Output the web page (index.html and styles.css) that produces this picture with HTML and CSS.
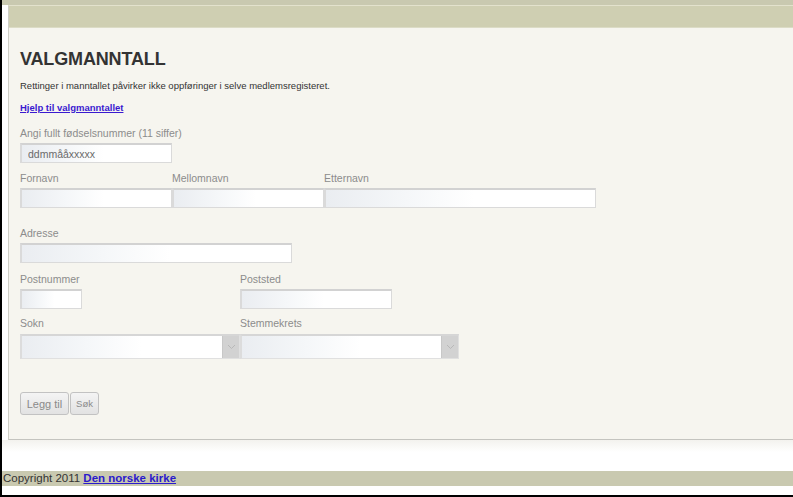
FILE: index.html
```html
<!DOCTYPE html>
<html lang="no">
<head>
<meta charset="utf-8">
<title>Valgmanntall</title>
<link rel="stylesheet" href="styles.css">
</head>
<body>
<div class="page">
  <div class="topstrip"></div>
  <div class="panel">
    <div class="panel-head"></div>
    <div class="panel-body">
      <h1 class="title">VALGMANNTALL</h1>
      <p class="desc">Rettinger i manntallet påvirker ikke oppføringer i selve medlemsregisteret.</p>
      <a class="help" href="#">Hjelp til valgmanntallet</a>

      <div class="field f-fnr">
        <label class="lbl">Angi fullt fødselsnummer (11 siffer)</label>
        <input class="inp w152" type="text" placeholder="ddmmååxxxxx">
      </div>

      <div class="row row-names">
        <div class="field">
          <label class="lbl">Fornavn</label>
          <input class="inp w152" type="text">
        </div>
        <div class="field">
          <label class="lbl">Mellomnavn</label>
          <input class="inp w152" type="text">
        </div>
        <div class="field">
          <label class="lbl">Etternavn</label>
          <input class="inp w272" type="text">
        </div>
      </div>

      <div class="field f-adr">
        <label class="lbl">Adresse</label>
        <input class="inp w272" type="text">
      </div>

      <div class="row row-post">
        <div class="field">
          <label class="lbl">Postnummer</label>
          <input class="inp w62" type="text">
        </div>
        <div class="field">
          <label class="lbl">Poststed</label>
          <input class="inp w152" type="text">
        </div>
      </div>

      <div class="row row-sokn">
        <div class="field">
          <label class="lbl lbl-sel">Sokn</label>
          <div class="sel w220"><select class="sel-box"><option></option></select><span class="sel-arrow"><svg width="9" height="6" viewBox="0 0 9 6"><path d="M1 1 L4.5 4.5 L8 1" fill="none" stroke="#b8b8b8" stroke-width="1"/></svg></span></div>
        </div>
        <div class="field">
          <label class="lbl lbl-sel">Stemmekrets</label>
          <div class="sel w219"><select class="sel-box"><option></option></select><span class="sel-arrow"><svg width="9" height="6" viewBox="0 0 9 6"><path d="M1 1 L4.5 4.5 L8 1" fill="none" stroke="#b8b8b8" stroke-width="1"/></svg></span></div>
        </div>
      </div>

      <div class="buttons">
        <button class="btn b-add" type="button">Legg til</button>
        <button class="btn b-search" type="button">Søk</button>
      </div>
    </div>
  </div>
  <div class="gap"></div>
  <div class="footer">Copyright 2011 <a href="#">Den norske kirke</a></div>
</div>
</body>
</html>
```

FILE: styles.css
```css
html, body {
  margin: 0;
  padding: 0;
  background: #fff;
  font-family: "Liberation Sans", Arial, sans-serif;
}

.page {
  height: 495px;
  border-left: 2px solid #000;
  border-bottom: 2px solid #000;
  overflow: hidden;
  display: flex;
  flex-direction: column;
}

.topstrip {
  height: 5px;
  background: #c9c9b0;
  flex: none;
}

.panel {
  margin-left: 6px;
  border-left: 1px solid #cfcfc7;
  border-top: 1px solid #e3e2cd;
  border-bottom: 1px solid #c4c4bf;
  background: #f6f5ef;
  flex: none;
}

.panel-head {
  height: 21px;
  background: #cfcfb2;
  border-bottom: 1px solid #dcdcc6;
}

.panel-body {
  padding: 20px 0 24px 11px;
  display: flex;
  flex-direction: column;
  align-items: flex-start;
}

.title {
  margin: 0;
  font-size: 18px;
  line-height: 22px;
  font-weight: bold;
  color: #333;
  letter-spacing: -0.15px;
}

.desc {
  margin: 9px 0 0;
  font-size: 9.5px;
  line-height: 14px;
  color: #333;
}

.help {
  margin-top: 8px;
  font-size: 9.5px;
  line-height: 14px;
  font-weight: bold;
  color: #3a1ad0;
  text-decoration: underline;
}

.field {
  display: flex;
  flex-direction: column;
  align-items: flex-start;
}

.f-fnr { margin-top: 11px; }
.row-names { margin-top: 8px; }
.f-adr { margin-top: 18px; }
.row-post { margin-top: 9px; }
.row-sokn { margin-top: 7px; }

.row {
  display: grid;
  grid-auto-flow: column;
}
.row-names { grid-template-columns: 152px 152px 272px; }
.row-post { grid-template-columns: 220px 152px; }
.row-sokn { grid-template-columns: 220px 219px; }

.lbl {
  font-size: 10.5px;
  line-height: 14px;
  color: #8c8c8c;
  margin-bottom: 3px;
}
.lbl-sel { margin-bottom: 4px; }

.inp {
  box-sizing: border-box;
  height: 20px;
  margin: 0;
  padding: 0 0 0 6px;
  border: 1px solid #dadada;
  border-top: 2px solid #d2d2d2;
  border-left: 2px solid #dadada;
  background: linear-gradient(to right, #eaedf1 0%, #f5f7f9 30%, #ffffff 55%);
  font-family: "Liberation Sans", Arial, sans-serif;
  font-size: 10.5px;
  color: #666;
  outline: none;
}
.inp::placeholder { color: #6a6a6a; }

.w62 { width: 62px; }
.w152 { width: 152px; }
.w272 { width: 272px; }
.w220 { width: 220px; }
.w219 { width: 219px; }

.sel {
  box-sizing: border-box;
  height: 25px;
  display: flex;
  border: 1px solid #e0e0e0;
  border-top: 2px solid #d6d6d6;
  border-left: 2px solid #dcdcdc;
  background: linear-gradient(to right, #eaedf1 0%, #f5f7f9 30%, #ffffff 55%);
}
.sel-box {
  flex: 1;
  min-width: 0;
  -webkit-appearance: none;
  appearance: none;
  border: 0;
  background: transparent;
  margin: 0;
  padding: 0;
  outline: none;
}
.sel-arrow {
  flex: none;
  width: 16px;
  background: #d2d2d2;
  border-left: 1px solid #c8c8c8;
  display: flex;
  align-items: center;
  justify-content: center;
}

.buttons {
  margin-top: 33px;
  display: flex;
  gap: 1px;
}
.btn {
  box-sizing: border-box;
  height: 23px;
  margin: 0;
  padding: 0;
  border: 1px solid #c2c2c2;
  border-radius: 3px;
  background: linear-gradient(to bottom, #f4f4f4, #e2e2e2);
  font-family: "Liberation Sans", Arial, sans-serif;
  color: #8a8a8a;
}
.b-add { width: 49px; font-size: 11px; }
.b-search { width: 29px; font-size: 9.5px; }

.gap {
  flex: 1;
  background: linear-gradient(to bottom, #f3f2ee 0px, #fbfbf9 8px, #ffffff 12px);
}

.footer {
  flex: none;
  height: 15px;
  line-height: 15px;
  margin-bottom: 9px;
  padding-left: 1px;
  background: #c9c9b0;
  font-size: 11.5px;
  color: #333;
}
.footer a {
  font-weight: bold;
  color: #2a1acc;
  text-decoration: underline;
}
```
